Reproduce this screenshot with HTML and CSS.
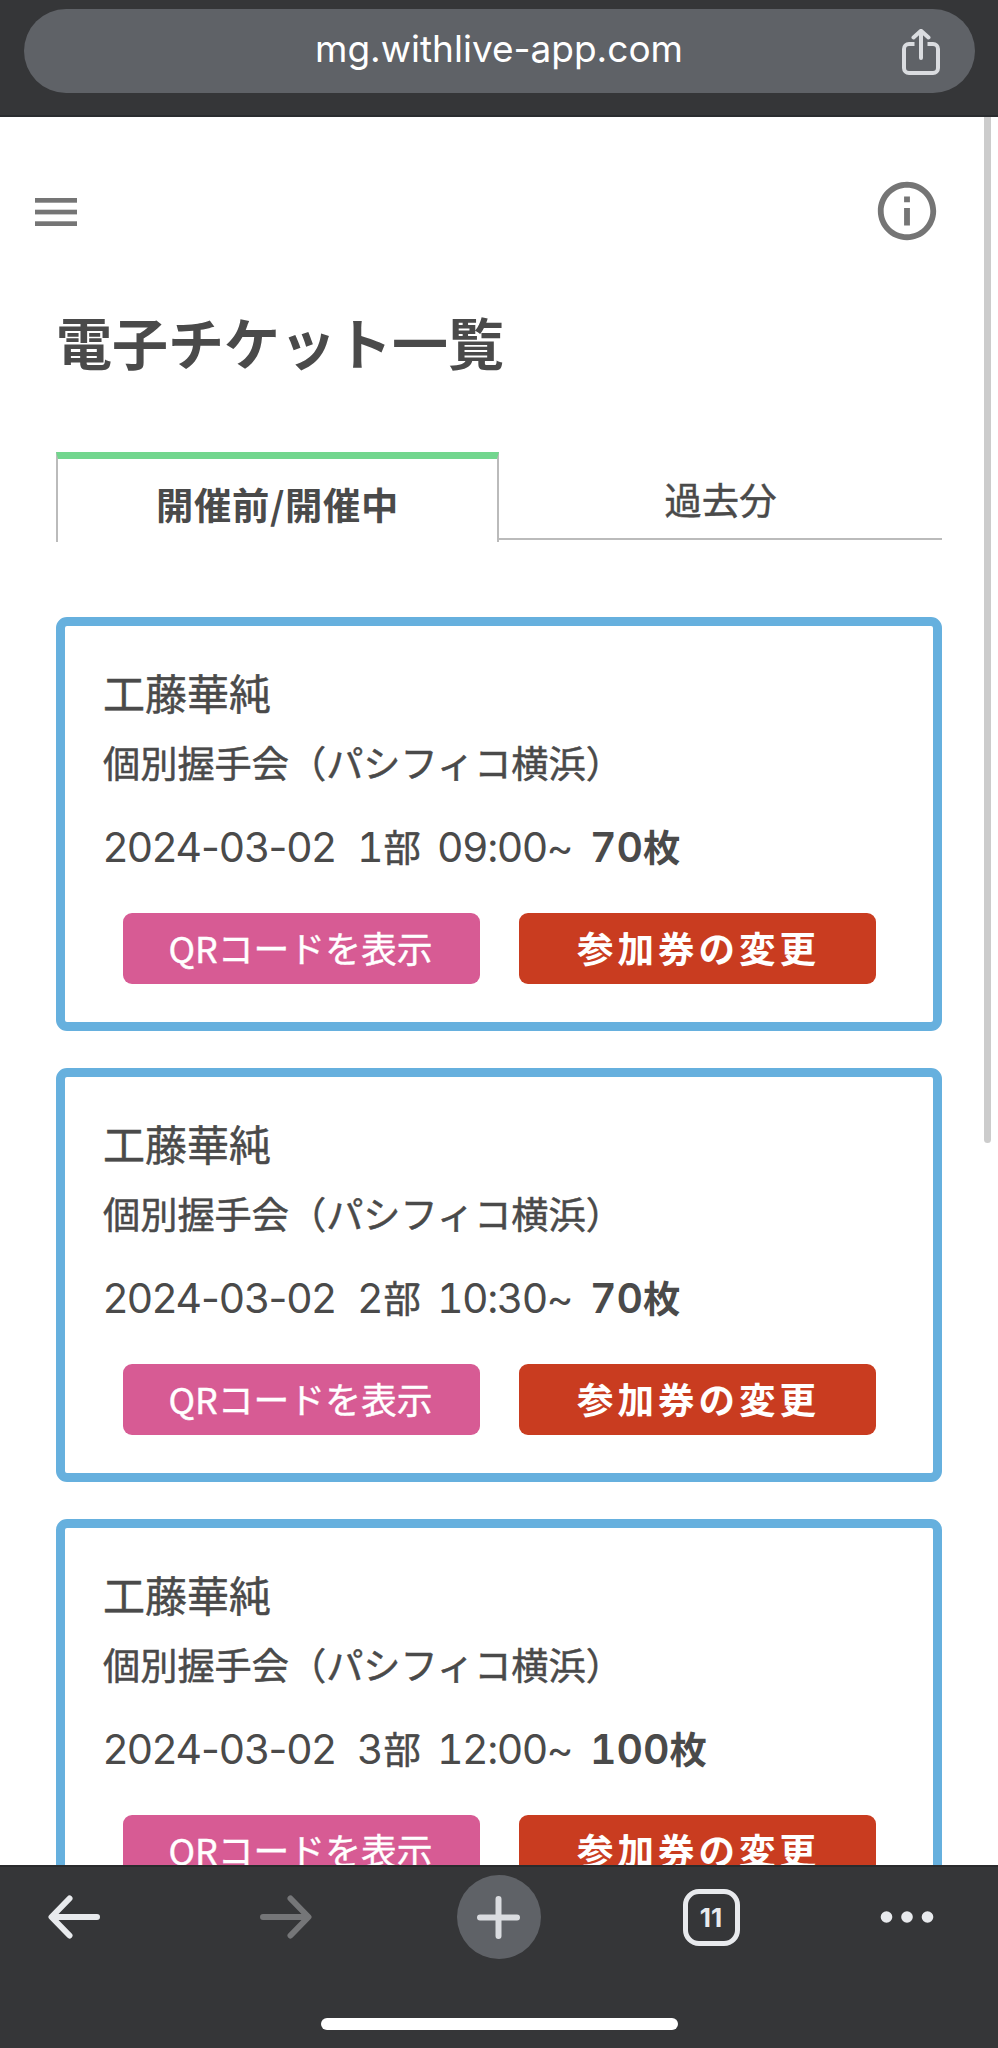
FILE: index.html
```html
<!DOCTYPE html>
<html lang="ja">
<head>
    <meta charset="UTF-8">
    <meta name="viewport" content="width=device-width, initial-scale=1.0">
    <title>電子チケット一覧</title>
    <link rel="stylesheet" href="styles.css">
</head>
<body>
    <header class="browser-bar">
        <div class="address-bar">
            <span class="address">mg.withlive-app.com</span>
            <svg class="share-icon" width="38" height="46" viewBox="0 0 38 46" fill="none" stroke="#dadce0" stroke-width="4" stroke-linecap="round" stroke-linejoin="round">
                <path d="M12.5 15H7a5 5 0 0 0-5 5v19a5 5 0 0 0 5 5h24a5 5 0 0 0 5-5V20a5 5 0 0 0-5-5h-5.500" stroke-linecap="butt"/>
                <path d="M19 29V2M11.500 8.500L19 1.800l7.500 6.700"/>
            </svg>
        </div>
    </header>

    <main class="page">
        <div class="page-header">
            <svg width="42" height="28" viewBox="0 0 42 28" fill="#757575">
                <rect width="42" height="4.700"/>
                <rect y="11.700" width="42" height="4.700"/>
                <rect y="23.300" width="42" height="4.700"/>
            </svg>
            <svg width="70" height="70" viewBox="0 0 24 24" fill="#757575">
                <path d="M11 7h2v2h-2zm0 4h2v6h-2zm1-9C6.480 2 2 6.480 2 12s4.480 10 10 10 10-4.480 10-10S17.520 2 12 2zm0 18c-4.410 0-8-3.590-8-8s3.590-8 8-8 8 3.590 8 8-3.590 8-8 8z"/>
            </svg>
        </div>

        <h1 class="page-title">電子チケット一覧</h1>

        <div class="tabs">
            <div class="tab active">開催前/開催中</div>
            <div class="tab">過去分</div>
        </div>

        <div class="ticket-list">
            <div class="ticket">
                <div class="ticket-name">工藤華純</div>
                <div class="ticket-event">個別握手会（パシフィコ横浜）</div>
                <div class="ticket-info">
                    <span class="date">2024-03-02</span>
                    <span class="part">1<span class="unit">部</span></span>
                    <span class="time">09:00~</span>
                    <span class="count">70<span class="unit">枚</span></span>
                </div>
                <div class="ticket-buttons">
                    <button class="button qr-button">QRコードを表示</button>
                    <button class="button change-button">参加券の変更</button>
                </div>
            </div>

            <div class="ticket">
                <div class="ticket-name">工藤華純</div>
                <div class="ticket-event">個別握手会（パシフィコ横浜）</div>
                <div class="ticket-info">
                    <span class="date">2024-03-02</span>
                    <span class="part">2<span class="unit">部</span></span>
                    <span class="time">10:30~</span>
                    <span class="count">70<span class="unit">枚</span></span>
                </div>
                <div class="ticket-buttons">
                    <button class="button qr-button">QRコードを表示</button>
                    <button class="button change-button">参加券の変更</button>
                </div>
            </div>

            <div class="ticket">
                <div class="ticket-name">工藤華純</div>
                <div class="ticket-event">個別握手会（パシフィコ横浜）</div>
                <div class="ticket-info">
                    <span class="date">2024-03-02</span>
                    <span class="part">3<span class="unit">部</span></span>
                    <span class="time">12:00~</span>
                    <span class="count">100<span class="unit">枚</span></span>
                </div>
                <div class="ticket-buttons">
                    <button class="button qr-button">QRコードを表示</button>
                    <button class="button change-button">参加券の変更</button>
                </div>
            </div>
        </div>

        <div class="scrollbar"></div>
    </main>

    <footer class="toolbar">
        <nav class="toolbar-icons">
            <svg width="52" height="44" viewBox="0 0 52 44" fill="none" stroke="#e8eaed" stroke-width="6" stroke-linecap="round" stroke-linejoin="round">
                <path d="M49 22H4M21.500 3.500L3.500 22l18 18.500"/>
            </svg>
            <svg width="52" height="44" viewBox="0 0 52 44" fill="none" stroke="#757678" stroke-width="6" stroke-linecap="round" stroke-linejoin="round">
                <path d="M3 22h45M30.500 3.500l18 18.500-18 18.500"/>
            </svg>
            <div class="new-tab">
                <svg width="43" height="43" viewBox="0 0 43 43" stroke="#dadce0" stroke-width="6" stroke-linecap="round">
                    <path d="M3 21.500h37M21.500 3v37"/>
                </svg>
            </div>
            <div class="tab-count">11</div>
            <svg width="54" height="12" viewBox="0 0 54 12" fill="#e8eaed">
                <circle cx="6.500" cy="6" r="5.800"/>
                <circle cx="27" cy="6" r="5.800"/>
                <circle cx="47.500" cy="6" r="5.800"/>
            </svg>
        </nav>
        <div class="home-indicator"></div>
    </footer>
</body>
</html>
```
FILE: styles.css
```css
* {
    margin: 0;
    padding: 0;
    box-sizing: border-box;
}

body {
    display: flex;
    flex-direction: column;
    height: 2048px;
    overflow: hidden;
    font-family: 'Noto Sans CJK JP', sans-serif;
    color: #4a4a4a;
    background: #fff;
}

/* browser chrome */
.browser-bar {
    flex: none;
    height: 117px;
    padding: 9px 23px 0 24px;
    background: #353638;
    border-bottom: 2px solid #2a2c2f;
}

.address-bar {
    display: grid;
    grid-template-columns: 1fr auto 1fr;
    align-items: center;
    height: 84px;
    padding: 0 35px 0 34px;
    border-radius: 42px;
    background: #5f6267;
}

.address {
    grid-column: 2;
    font-family: Inter, sans-serif;
    font-size: 37px;
    line-height: 80px;
    padding-bottom: 4px;
    color: #fff;
}

.share-icon {
    justify-self: end;
    margin-top: 2px;
}

/* page */
.page {
    position: relative;
    flex: 1;
    min-height: 0;
    overflow: hidden;
    padding: 59px 56px 0;
}

.page-header {
    display: flex;
    justify-content: space-between;
    align-items: center;
    height: 70px;
    margin: 0 0 0 -21px;
}

.page-header svg:first-child {
    margin-top: 2px;
}

.page-title {
    margin-top: 53px;
    font-size: 56px;
    line-height: 84px;
}

.tabs {
    display: flex;
    align-items: flex-start;
    height: 91px;
    margin-top: 69px;
}

.tab {
    width: 443px;
    height: 88px;
    border-bottom: 2px solid #bbb;
    font-size: 37.300px;
    line-height: 95px;
    text-align: center;
    -webkit-text-stroke: 0.5px #4a4a4a;
}

.tab.active {
    height: 90px;
    border-top: 7px solid #72d68e;
    border-left: 2px solid #bbb;
    border-right: 2px solid #bbb;
    border-bottom: none;
    font-weight: bold;
    letter-spacing: 0.7px;
    line-height: 91px;
    -webkit-text-stroke: 0;
}

.ticket-list {
    display: flex;
    flex-direction: column;
    gap: 37px;
    margin-top: 74px;
}

.ticket {
    height: 414px;
    padding: 35px 38px 0;
    border: 9px solid #66b0de;
    border-radius: 11px;
}

.ticket-name {
    font-size: 42px;
    line-height: 62px;
    -webkit-text-stroke: 0.5px #4a4a4a;
}

.ticket-event {
    margin-top: 11px;
    font-size: 37.200px;
    line-height: 56px;
    -webkit-text-stroke: 0.5px #4a4a4a;
}

.ticket-info {
    display: flex;
    align-items: baseline;
    height: 60px;
    margin-top: 27px;
    font-family: Inter, 'Noto Sans CJK JP', sans-serif;
    font-size: 41px;
    font-variant-numeric: tabular-nums;
    line-height: 60px;
    white-space: nowrap;
}

.date {
    width: 254px;
    font-variant-numeric: normal;
    letter-spacing: -0.900px;
}

.part {
    width: 60px;
    text-align: right;
}

.time {
    margin-left: 20px;
    width: 134px;
    letter-spacing: -1.500px;
}

.count {
    margin-left: 19px;
    font-weight: 600;
}

.unit {
    font-family: 'Noto Sans CJK JP', sans-serif;
    font-size: 37.300px;
    line-height: 1;
}

.part .unit {
    -webkit-text-stroke: 0.5px #4a4a4a;
}

.ticket-buttons {
    display: flex;
    justify-content: space-between;
    padding: 0 19px 0 20px;
    margin-top: 36px;
}

.button {
    width: 357px;
    height: 71px;
    border: none;
    border-radius: 9px;
    font-family: 'Noto Sans CJK JP', sans-serif;
    line-height: 68px;
    padding-bottom: 3px;
    color: #fff;
}

.qr-button {
    padding-right: 2px;
    font-size: 35.800px;
    background: #d75b94;
    -webkit-text-stroke: 0.4px #fff;
}

.change-button {
    font-size: 36.500px;
    font-weight: bold;
    letter-spacing: 4px;
    line-height: 70px;
    padding: 0 0 1px 2px;
    background: #c93c20;
}

.scrollbar {
    position: absolute;
    top: 0;
    right: 7px;
    width: 7px;
    height: 1026px;
    border-radius: 0 0 4px 4px;
    background: #ccc;
}

/* bottom toolbar */
.toolbar {
    flex: none;
    height: 183px;
    background: #353638;
    border-top: 2px solid #2a2b2d;
}

.toolbar-icons {
    display: grid;
    grid-template-columns: 148px 276px 149px 276px 115px;
    align-items: center;
    justify-items: center;
    height: 84px;
    margin-top: 8px;
}

.new-tab {
    display: flex;
    align-items: center;
    justify-content: center;
    width: 84px;
    height: 84px;
    border-radius: 50%;
    background: #5f6267;
}

.tab-count {
    width: 57px;
    height: 57px;
    border: 5px solid #e8eaed;
    border-radius: 16px;
    font-family: Inter, sans-serif;
    font-size: 26px;
    font-weight: bold;
    line-height: 48px;
    text-align: center;
    color: #e8eaed;
}

.home-indicator {
    width: 357px;
    height: 12px;
    margin: 59px auto 0;
    border-radius: 6px;
    background: #fff;
}
```
